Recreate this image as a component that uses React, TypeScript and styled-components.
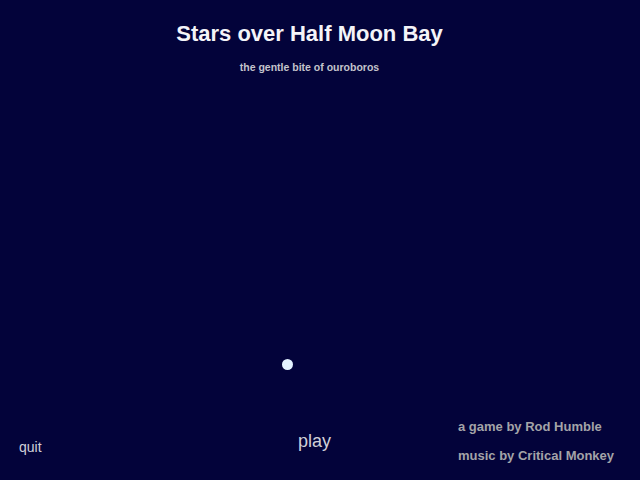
import React from 'react';
import styled, { createGlobalStyle } from 'styled-components';

const GlobalStyle = createGlobalStyle`
  html, body {
    margin: 0;
    padding: 0;
    background: #03033a;
  }
  body {
    font-family: 'Liberation Sans', Arial, sans-serif;
  }
`;

const Screen = styled.div`
  position: relative;
  width: 640px;
  height: 480px;
  background: #03033a;
  display: flex;
  flex-direction: column;
  overflow: hidden;
`;

const Header = styled.header`
  display: flex;
  flex-direction: column;
  align-items: center;
  padding: 22px 21px 0 0;
`;

const Title = styled.h1`
  margin: 0;
  font-size: 22px;
  font-weight: bold;
  color: #f4f4f8;
  line-height: 24px;
`;

const Subtitle = styled.div`
  margin-top: 15px;
  font-size: 10.5px;
  font-weight: bold;
  color: #c4c4cc;
  line-height: 12px;
`;

const Ball = styled.div`
  position: absolute;
  left: 282px;
  top: 359px;
  width: 11px;
  height: 11px;
  border-radius: 50%;
  background: #e4f2ff;
`;

const Footer = styled.footer`
  margin-top: auto;
  display: grid;
  grid-template-columns: 152px 287px 1fr;
  align-items: end;
  padding: 0 0 17px 19px;
`;

const MenuItem = styled.div<{ $size: number; $lift: number; $center?: boolean }>`
  font-size: ${(p) => p.$size}px;
  margin-bottom: ${(p) => p.$lift}px;
  justify-self: ${(p) => (p.$center ? 'center' : 'start')};
  color: #d0d0d8;
  line-height: 1;
`;

const Credits = styled.div`
  display: flex;
  flex-direction: column;
  gap: 14px;
`;

const Credit = styled.div`
  font-size: 13px;
  font-weight: bold;
  color: #a4a4a8;
  line-height: 15px;
  white-space: nowrap;
`;

export default function App() {
  return (
    <>
      <GlobalStyle />
      <Screen>
        <Header>
          <Title>Stars over Half Moon Bay</Title>
          <Subtitle>the gentle bite of ouroboros</Subtitle>
        </Header>
        <Ball />
        <Footer>
          <MenuItem $size={14} $lift={9}>quit</MenuItem>
          <MenuItem $size={18} $lift={13} $center>play</MenuItem>
          <Credits>
            <Credit>a game by Rod Humble</Credit>
            <Credit>music by Critical Monkey</Credit>
          </Credits>
        </Footer>
      </Screen>
    </>
  );
}
